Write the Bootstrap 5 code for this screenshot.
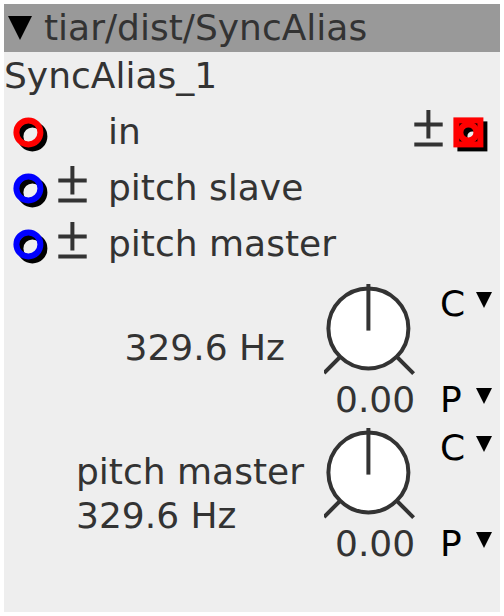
<!DOCTYPE html>
<html lang="en">
<head>
<meta charset="utf-8">
<meta name="viewport" content="width=device-width, initial-scale=1">
<title>SyncAlias_1</title>
<link href="https://cdn.jsdelivr.net/npm/bootstrap@5.3.0/dist/css/bootstrap.min.css" rel="stylesheet">
<style>
body { font: 36px/48px "DejaVu Sans", sans-serif; color: #333; background: #fff; }
svg { display: block; flex: none; }
.module { margin: 4px; height: 608px; background: #eee; }
.title-bar { height: 48px; background: #999; padding-left: 4px; gap: 12px; }
.ports { padding: 4px 12px 8px 8px; }
.port-row { height: 56px; }
.port-text { margin-left: 16px; }
.knob-row { height: 144px; }
.knob-label { width: 320px; line-height: 44px; padding: 0 20px 4px 0; }
.knob-label-single { padding: 0 39px 8px 0; }
.knob-box { width: 92px; padding-top: 4px; margin-right: 24px; }
.knob-value { padding-left: 11px; }
.pick { height: 48px; width: 52px; color: #000; }
.pick svg { margin-top: 12px; }
</style>
</head>
<body>
<svg width="0" height="0" class="position-absolute" aria-hidden="true">
  <defs>
    <g id="sign" fill="none" stroke="#333" stroke-width="4"><path d="M2.3 20.4H30.7M16.4 6V34.6M2.3 40.4H30.7"/></g>
    <g id="ring" fill="none" stroke-width="6"><circle cx="20.4" cy="32.4" r="12" stroke="#000"/><circle cx="16.4" cy="28.4" r="12" stroke="currentColor"/></g>
    <g id="knob" fill="none" stroke="#333" stroke-width="4"><path d="M32 57L0 89M57 57L89.6 89.6"/><circle cx="44.4" cy="44.4" r="40" fill="#fff"/><path d="M44.4 0V46.6"/></g>
    <path id="caret" d="M0 0H16L8 16Z"/>
  </defs>
</svg>
<main class="module">
  <header class="title-bar d-flex align-items-center">
    <svg width="24" height="24"><path d="M0 0H24L12 24Z"/></svg>
    <div>tiar/dist/SyncAlias</div>
  </header>
  <div>SyncAlias_1</div>
  <section class="ports">
    <div class="port-row d-flex align-items-center">
      <svg width="40" height="56" color="#f00"><use href="#ring"/></svg>
      <svg width="40" height="56"></svg>
      <div class="port-text">in</div>
      <svg class="ms-auto" width="40" height="56"><use href="#sign"/></svg>
      <svg width="36" height="56">
        <g fill="none" stroke-width="6">
          <g stroke="#000"><rect x="8.4" y="20.4" width="24" height="24"/><circle cx="20.4" cy="32.4" r="8"/></g>
          <g stroke="#f00"><rect x="4.4" y="16.4" width="24" height="24"/><circle cx="16.4" cy="28.4" r="8"/></g>
        </g>
      </svg>
    </div>
    <div class="port-row d-flex align-items-center">
      <svg width="44" height="56" color="#00f"><use href="#ring"/></svg>
      <svg width="36" height="56"><use href="#sign"/></svg>
      <div class="port-text">pitch slave</div>
    </div>
    <div class="port-row d-flex align-items-center">
      <svg width="44" height="56" color="#00f"><use href="#ring"/></svg>
      <svg width="36" height="56"><use href="#sign"/></svg>
      <div class="port-text">pitch master</div>
    </div>
  </section>
  <section class="knob-row d-flex">
    <div class="knob-label knob-label-single d-flex justify-content-end align-items-center">
      <div>329.6 Hz</div>
    </div>
    <div class="knob-box">
      <svg width="92" height="92"><use href="#knob"/></svg>
      <div class="knob-value">0.00</div>
    </div>
    <div class="d-flex flex-column justify-content-between">
      <div class="pick d-flex justify-content-between">C<svg width="16" height="16"><use href="#caret"/></svg></div>
      <div class="pick d-flex justify-content-between">P<svg width="16" height="16"><use href="#caret"/></svg></div>
    </div>
  </section>
  <section class="knob-row d-flex">
    <div class="knob-label d-flex justify-content-end align-items-center">
      <div>pitch master<br>329.6 Hz</div>
    </div>
    <div class="knob-box">
      <svg width="92" height="92"><use href="#knob"/></svg>
      <div class="knob-value">0.00</div>
    </div>
    <div class="d-flex flex-column justify-content-between">
      <div class="pick d-flex justify-content-between">C<svg width="16" height="16"><use href="#caret"/></svg></div>
      <div class="pick d-flex justify-content-between">P<svg width="16" height="16"><use href="#caret"/></svg></div>
    </div>
  </section>
</main>
<script src="https://cdn.jsdelivr.net/npm/bootstrap@5.3.0/dist/js/bootstrap.bundle.min.js"></script>
</body>
</html>
